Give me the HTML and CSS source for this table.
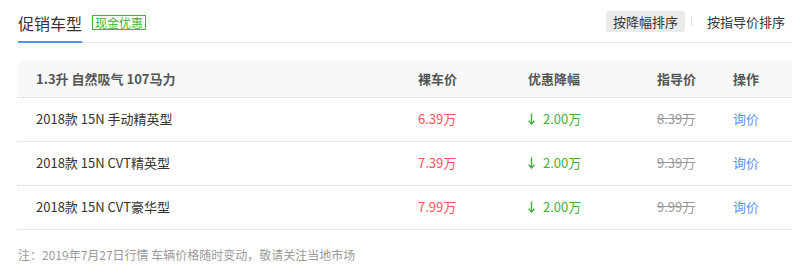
FILE: index.html
```html
<!DOCTYPE html>
<html lang="zh-CN">
<head>
<meta charset="utf-8">
<title>促销车型</title>
<link rel="stylesheet" href="styles.css">
</head>
<body>
<div class="wrap">
  <div class="tabs">
    <div class="tab">促销车型</div>
    <span class="badge">现金优惠</span>
    <div class="sorts">
      <span class="sort active">按降幅排序</span>
      <span class="sep"></span>
      <span class="sort">按指导价排序</span>
    </div>
  </div>

  <div class="table">
    <div class="row head">
      <div class="c-name">1.3升 自然吸气 107马力</div>
      <div class="c-price">裸车价</div>
      <div class="c-off">优惠降幅</div>
      <div class="c-guide">指导价</div>
      <div class="c-op">操作</div>
    </div>
    <div class="row">
      <div class="c-name">2018款 15N 手动精英型</div>
      <div class="c-price red">6.39万</div>
      <div class="c-off green"><svg class="arrow" width="7" height="12" viewBox="0 0 7 12"><path d="M3.5 0.5V11" stroke="currentColor" stroke-width="1.4" fill="none"/><path d="M0.6 7.6L3.5 11L6.4 7.6" stroke="currentColor" stroke-width="1.4" fill="none"/></svg>2.00万</div>
      <div class="c-guide strike">8.39万</div>
      <div class="c-op link">询价</div>
    </div>
    <div class="row">
      <div class="c-name">2018款 15N CVT精英型</div>
      <div class="c-price red">7.39万</div>
      <div class="c-off green"><svg class="arrow" width="7" height="12" viewBox="0 0 7 12"><path d="M3.5 0.5V11" stroke="currentColor" stroke-width="1.4" fill="none"/><path d="M0.6 7.6L3.5 11L6.4 7.6" stroke="currentColor" stroke-width="1.4" fill="none"/></svg>2.00万</div>
      <div class="c-guide strike">9.39万</div>
      <div class="c-op link">询价</div>
    </div>
    <div class="row">
      <div class="c-name">2018款 15N CVT豪华型</div>
      <div class="c-price red">7.99万</div>
      <div class="c-off green"><svg class="arrow" width="7" height="12" viewBox="0 0 7 12"><path d="M3.5 0.5V11" stroke="currentColor" stroke-width="1.4" fill="none"/><path d="M0.6 7.6L3.5 11L6.4 7.6" stroke="currentColor" stroke-width="1.4" fill="none"/></svg>2.00万</div>
      <div class="c-guide strike">9.99万</div>
      <div class="c-op link">询价</div>
    </div>
  </div>

  <p class="note">注：2019年7月27日行情 车辆价格随时变动，敬请关注当地市场</p>
</div>
</body>
</html>
```

FILE: styles.css
```css
* { box-sizing: border-box; }
html, body { margin: 0; padding: 0; background: #fff; }
body {
  font-family: "Noto Sans CJK SC", "Noto Sans", "Liberation Sans", sans-serif;
  color: #333;
  font-size: 13px;
}
.wrap {
  margin-left: 18px;
  width: 774px;
}
.tabs {
  display: flex;
  align-items: flex-end;
  height: 43px;
  border-bottom: 1px solid #e3e3e3;
}
.tab {
  font-size: 16px;
  line-height: 22px;
  padding-bottom: 7px;
  border-bottom: 2px solid #5590f4;
  margin-bottom: -1px;
  color: #333;
}
.badge {
  align-self: flex-start;
  margin-top: 15px;
  margin-left: 10px;
  border: 1px solid #43b13a;
  color: #43b13a;
  font-size: 12px;
  line-height: 13px;
  padding: 0 2px;
}
.sorts {
  align-self: flex-start;
  margin-top: 11px;
  margin-left: auto;
  display: flex;
  align-items: center;
}
.sort {
  font-size: 13px;
  line-height: 21px;
  height: 21px;
  padding: 0 7px;
  border-radius: 3px;
  color: #333;
}
.sort.active { background: #ebebeb; }
.sep {
  width: 1px;
  height: 9px;
  background: #e0e0e0;
  margin: 0 8px 0 6px;
}
.table { margin-top: 18px; }
.row {
  display: grid;
  grid-template-columns: 400px 110px 129px 76px 59px;
  align-items: center;
  height: 44px;
  padding-bottom: 2px;
  border-bottom: 1px dotted #d6d6d6;
  font-size: 13px;
}
.row.head {
  height: 37px;
  padding-bottom: 1px;
  background: #f8f8f8;
  font-weight: bold;
  color: #555;
}
.c-name { padding-left: 18px; }
.red { color: #ff5257; }
.green { color: #41b036; display: flex; align-items: center; }
.arrow { margin-right: 8px; color: #41b036; }
.strike { color: #999; text-decoration: line-through; }
.link { color: #5f8ff5; }
.note {
  margin: 15px 0 0;
  font-size: 12px;
  line-height: 20px;
  color: #999;
}
```
